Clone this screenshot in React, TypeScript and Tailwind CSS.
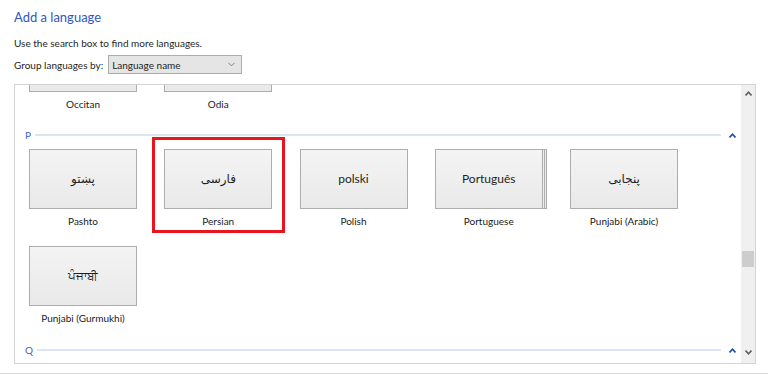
import { ChevronDown } from "lucide-react";

const font = { fontFamily: 'Lato, "Noto Sans", "DejaVu Sans", sans-serif' };

type Lang = { native: string; name: string; stacked?: boolean; selected?: boolean; rtl?: boolean };

const rowP1: Lang[] = [
  { native: "پښتو", name: "Pashto", rtl: true },
  { native: "فارسی", name: "Persian", rtl: true, selected: true },
  { native: "polski", name: "Polish" },
  { native: "Português", name: "Portuguese", stacked: true },
  { native: "پنجابی", name: "Punjabi (Arabic)", rtl: true },
];

function Tile({ lang }: { lang: Lang }) {
  return (
    <div className="relative w-[108px] h-[97px] flex flex-col items-center">
      {lang.selected && (
        <div className="absolute left-[-12px] top-[-12px] w-[133px] h-[96px] border-[3px] border-[#e8141f]" />
      )}
      <div className="relative w-[108px] h-[60px]">
        {lang.stacked && (
          <>
            <div className="absolute left-[4px] top-0 w-[108px] h-[60px] border border-[#adadad] bg-[#ececec]" />
            <div className="absolute left-[2px] top-0 w-[108px] h-[60px] border border-[#adadad] bg-[#efefef]" />
          </>
        )}
        <div className="absolute inset-0 border border-[#adadad] bg-gradient-to-b from-[#f4f4f4] to-[#e9e9e9] flex items-center justify-center text-[12px] text-[#1e1e1e]">
          {lang.native && (
            <span dir={lang.rtl ? "rtl" : undefined} style={lang.rtl ? { fontFamily: '"DejaVu Sans", sans-serif' } : undefined}>
              {lang.native}
            </span>
          )}
        </div>
      </div>
      <div className="mt-[5px] text-[10px] leading-[14px] text-[#1a1a1a]">{lang.name}</div>
    </div>
  );
}

function Header({ letter }: { letter: string }) {
  return (
    <div className="flex items-center h-[14px] pl-[10px] pr-[5px]">
      <span className="text-[10px] text-[#3b62c9] leading-none">{letter}</span>
      <div className="ml-[4px] flex-1 h-[2px] bg-[#dde5f5]" />
      <svg className="ml-[8px]" width="7" height="5" viewBox="0 0 7 5">
        <path d="M0.5 4.5 L3.5 1.2 L6.5 4.5" fill="none" stroke="#1c4fa8" strokeWidth="1.6" />
      </svg>
    </div>
  );
}

export default function App() {
  return (
    <div className="w-[768px] h-[374px] bg-white overflow-hidden text-[#1e1e1e]" style={font}>
      <div className="px-[14px] pt-[7px]">
        <h1 className="text-[13px] leading-[20px] text-[#2f56c3]">Add a language</h1>
        <p className="mt-[9px] text-[10px] leading-[14px]">Use the search box to find more languages.</p>
        <div className="mt-[5px] flex items-center gap-[5px] text-[10px] leading-[14px]">
          <span className="whitespace-nowrap">Group languages by:</span>
          <div className="w-[134px] h-[19px] border border-[#acacac] bg-[#e5e5e5] flex items-center justify-between pl-[3px] pr-[4px]">
            <span className="whitespace-nowrap">Language name</span>
            <ChevronDown size={11} strokeWidth={1.5} color="#555" />
          </div>
        </div>
      </div>

      <div className="ml-[14px] mt-[10px] w-[742px] h-[280px] border border-[#d4d4d4] flex">
        <div className="flex-1 overflow-hidden">
          {/* list is scrolled: the O row sits partly above the view */}
          <div className="mt-[-53px] pl-[14px]">
            <div className="flex gap-[27.25px]">
              <Tile lang={{ native: "", name: "Occitan" }} />
              <Tile lang={{ native: "", name: "Odia" }} />
            </div>
            <div className="ml-[-14px] mt-[-1px]">
              <Header letter="P" />
            </div>
            <div className="mt-[7px] flex gap-[27.25px]">
              {rowP1.map((l) => (
                <Tile key={l.name} lang={l} />
              ))}
            </div>
            <div className="flex gap-[27.25px]">
              <Tile lang={{ native: "ਪੰਜਾਬੀ", name: "Punjabi (Gurmukhi)" }} />
            </div>
            <div className="ml-[-14px] mt-0">
              <Header letter="Q" />
            </div>
          </div>
        </div>
        <div className="w-[14px] bg-[#f0f0f0] flex flex-col items-center py-[6px]">
          <svg width="7" height="5" viewBox="0 0 7 5">
            <path d="M0.5 4.5 L3.5 1.2 L6.5 4.5" fill="none" stroke="#606060" strokeWidth="1.6" />
          </svg>
          <div className="w-[12px] h-[16px] bg-[#cdcdcd] mt-[155px]" />
          <div className="flex-1" />
          <svg className="mb-[2px]" width="7" height="5" viewBox="0 0 7 5">
            <path d="M0.5 0.5 L3.5 3.8 L6.5 0.5" fill="none" stroke="#606060" strokeWidth="1.6" />
          </svg>
        </div>
      </div>
      <div className="mt-[9px] h-px bg-[#dadada]" />
    </div>
  );
}
